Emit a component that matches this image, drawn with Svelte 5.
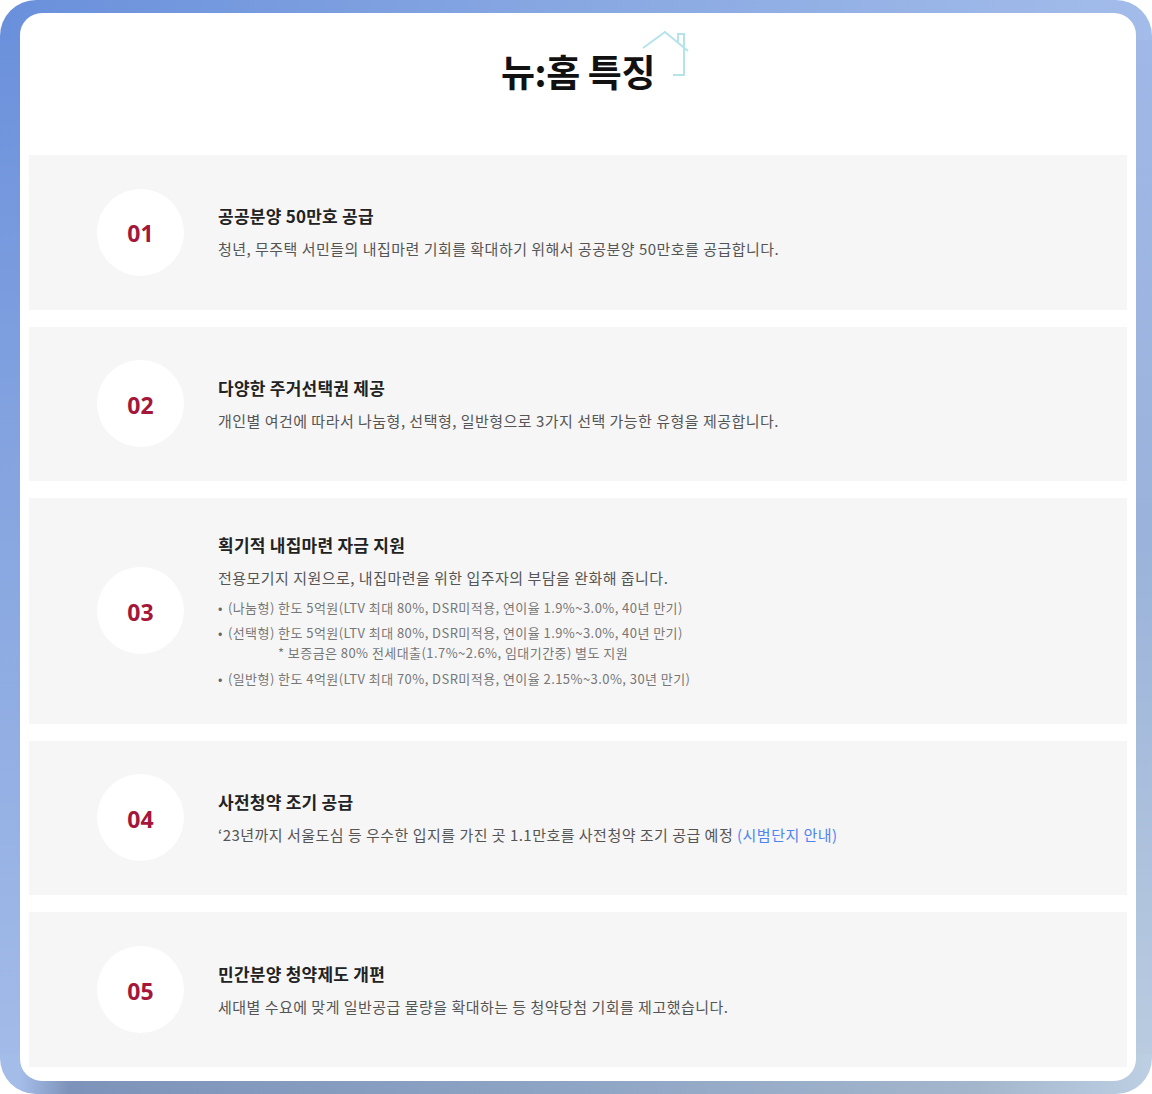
<script>
  const items = [
    { n: '01', title: '공공분양 50만호 공급', desc: '청년, 무주택 서민들의 내집마련 기회를 확대하기 위해서 공공분양 50만호를 공급합니다.' },
    { n: '02', title: '다양한 주거선택권 제공', desc: '개인별 여건에 따라서 나눔형, 선택형, 일반형으로 3가지 선택 가능한 유형을 제공합니다.' },
    { n: '03', title: '획기적 내집마련 자금 지원', desc: '전용모기지 지원으로, 내집마련을 위한 입주자의 부담을 완화해 줍니다.', tall: true },
    { n: '04', title: '사전청약 조기 공급', desc: '‘23년까지 서울도심 등 우수한 입지를 가진 곳 1.1만호를 사전청약 조기 공급 예정 ', link: '(시범단지 안내)' },
    { n: '05', title: '민간분양 청약제도 개편', desc: '세대별 수요에 맞게 일반공급 물량을 확대하는 등 청약당첨 기회를 제고했습니다.' }
  ];
</script>

<div class="frame">
  <main class="panel">
    <header class="head">
      <h1>뉴:홈 특징</h1>
      <svg class="house" viewBox="0 0 48 48" width="48" height="48" aria-hidden="true">
        <path d="M1 17 L23 1 L46 20 M36 12 V3 H42 V44 H31" fill="none" stroke="#b5e3ea" stroke-width="2" />
      </svg>
    </header>
    <div class="list">
      {#each items as it}
        <section class="row" class:tall={it.tall}>
          <div class="circle">{it.n}</div>
          <div class="body">
            <h2>{it.title}</h2>
            <p class="desc">{it.desc}{#if it.link}<span class="link">{it.link}</span>{/if}</p>
            {#if it.tall}
              <ul>
                <li>(나눔형) 한도 5억원(LTV 최대 80%, DSR미적용, 연이율 1.9%~3.0%, 40년 만기)</li>
                <li>(선택형) 한도 5억원(LTV 최대 80%, DSR미적용, 연이율 1.9%~3.0%, 40년 만기)
                  <div class="note">* 보증금은 80% 전세대출(1.7%~2.6%, 임대기간중) 별도 지원</div>
                </li>
                <li>(일반형) 한도 4억원(LTV 최대 70%, DSR미적용, 연이율 2.15%~3.0%, 30년 만기)</li>
              </ul>
            {/if}
          </div>
        </section>
      {/each}
    </div>
  </main>
</div>

<style>
  :global(body) {
    margin: 0;
    background: #fff;
  }
  .frame {
    width: 1152px;
    height: 1094px;
    box-sizing: border-box;
    padding: 13px 16px 13px 20px;
    border-radius: 36px;
    background-color: #92aad4;
    background-image:
      linear-gradient(90deg, #a4bce8 0%, #a4bce8 1.8%, #7d93b9 6%, #8fa5c5 50%, #a3b6cc 85%, #bdcfe3 100%),
      linear-gradient(90deg, #6a90dc 0%, #88a8e2 50%, #a3bcea 100%),
      linear-gradient(180deg, #6a90dc 0%, #86a5e0 45%, #a4bce8 100%),
      linear-gradient(180deg, #a0b8e8 0%, #9bb3da 50%, #bccde0 100%);
    background-repeat: no-repeat;
    background-position: left bottom, left top, left top, right top;
    background-size: 100% 40px, 100% 40px, 50% 100%, 50% 100%;
    font-family: "Noto Sans CJK KR", "Noto Sans", sans-serif;
  }
  .panel {
    height: 1068px;
    box-sizing: border-box;
    background: #fff;
    border-radius: 22px;
    padding: 0 9px;
    overflow: hidden;
  }
  .head {
    height: 142px;
    display: flex;
    justify-content: center;
    position: relative;
  }
  h1 {
    margin: 34px 0 0;
    font-size: 37px;
    line-height: 48px;
    height: 48px;
    font-weight: 700;
    color: #111;
    letter-spacing: -0.4px;
  }
  .house {
    position: absolute;
    left: 613px;
    top: 18px;
  }
  .list {
    display: flex;
    flex-direction: column;
    gap: 17px;
  }
  .row {
    height: 154.6px;
    background: #f6f6f6;
    display: flex;
    align-items: center;
    padding-left: 68px;
  }
  .row.tall {
    height: 225.5px;
  }
  .tall .body {
    padding-top: 5px;
  }
  .circle {
    width: 87px;
    height: 85px;
    padding-top: 2px;
    flex: none;
    border-radius: 50%;
    background: #fff;
    color: #a5173a;
    font-size: 23px;
    font-weight: 700;
    font-family: "Noto Sans", sans-serif;
    display: flex;
    align-items: center;
    justify-content: center;
  }
  .body {
    margin-left: 34px;
  }
  h2 {
    margin: 0;
    font-size: 17px;
    line-height: 24px;
    font-weight: 700;
    color: #222;
    letter-spacing: 0.25px;
  }
  .desc {
    margin: 10px 0 0;
    font-size: 15px;
    line-height: 22px;
    color: #555;
    letter-spacing: 0.48px;
    white-space: nowrap;
  }
  .link {
    color: #4f83f0;
  }
  ul {
    list-style: none;
    margin: 9px 0 0;
    padding: 0;
    font-size: 13px;
    line-height: 20px;
    color: #777;
    letter-spacing: 0.44px;
    white-space: nowrap;
  }
  li {
    padding-bottom: 4px;
  }
  li:first-child {
    padding-bottom: 5px;
  }
  li::before {
    content: "•";
    font-size: 13px;
    margin-right: 5px;
    color: #666;
  }
  .note {
    padding-left: 60px;
    margin-bottom: 2px;
  }
</style>
